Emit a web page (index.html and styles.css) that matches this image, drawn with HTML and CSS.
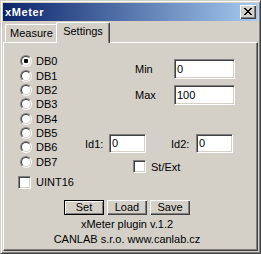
FILE: index.html
```
<!DOCTYPE html>
<html>
<head>
<meta charset="utf-8">
<link rel="stylesheet" href="styles.css">
</head>
<body>
<div class="window">
  <div class="titlebar">
    <span class="title">xMeter</span>
    <span class="close"><svg width="8" height="7" viewBox="0 0 8 7" shape-rendering="crispEdges"><path d="M0 0h2v1H0zM6 0h2v1H6zM1 1h2v1H1zM5 1h2v1H5zM2 2h4v1H2zM3 3h2v1H3zM2 4h4v1H2zM1 5h2v1H1zM5 5h2v1H5zM0 6h2v1H0zM6 6h2v1H6z"/></svg></span>
  </div>
  <div class="tabstrip">
    <div class="tab">Measure</div>
    <div class="tab active">Settings</div>
  </div>
  <div class="panel">
    <div class="main">
      <div class="left">
        <div class="opt"><span class="radio"><span class="radio-in"><span class="dot"></span></span></span>DB0</div>
        <div class="opt"><span class="radio"><span class="radio-in"></span></span>DB1</div>
        <div class="opt"><span class="radio"><span class="radio-in"></span></span>DB2</div>
        <div class="opt"><span class="radio"><span class="radio-in"></span></span>DB3</div>
        <div class="opt"><span class="radio"><span class="radio-in"></span></span>DB4</div>
        <div class="opt"><span class="radio"><span class="radio-in"></span></span>DB5</div>
        <div class="opt"><span class="radio"><span class="radio-in"></span></span>DB6</div>
        <div class="opt"><span class="radio"><span class="radio-in"></span></span>DB7</div>
        <div class="opt chk"><span class="check"></span>UINT16</div>
      </div>
      <div class="right">
        <div class="range">
          <div class="field"><span class="lbl">Min</span><span class="edit">0</span></div>
          <div class="field"><span class="lbl">Max</span><span class="edit">100</span></div>
        </div>
        <div class="ids">
          <span class="lbl id1">Id1:</span><span class="edit small">0</span>
          <span class="lbl id2">Id2:</span><span class="edit small">0</span>
        </div>
        <div class="opt stext"><span class="check"></span>St/Ext</div>
      </div>
    </div>
    <div class="buttons">
      <span class="btn default">Set</span><span class="btn">Load</span><span class="btn">Save</span>
    </div>
    <div class="info">xMeter plugin v.1.2<br>CANLAB s.r.o. www.canlab.cz</div>
  </div>
</div>
</body>
</html>
```
FILE: styles.css
```
* { box-sizing: border-box; }
body {
  margin: 0;
  background: #d4d0c8;
  font: 11px "Liberation Sans", Arial, sans-serif;
  color: #000;
}
.window {
  width: 261px;
  height: 254px;
  background: #d4d0c8;
  border: 1px solid;
  border-color: #d4d0c8 #404040 #404040 #d4d0c8;
  box-shadow: inset 1px 1px #fff, inset -1px -1px #808080;
  padding: 2px;
  display: flex;
  flex-direction: column;
}
.titlebar {
  height: 18px;
  flex: none;
  background: linear-gradient(to right, #0a246a, #a6caf0);
  display: flex;
  align-items: flex-start;
  justify-content: space-between;
  padding: 2px 2px 0 2px;
}
.title {
  color: #fff;
  font-weight: bold;
  letter-spacing: 0.6px;
  line-height: 14px;
}
.close {
  width: 16px;
  height: 14px;
  background: #d4d0c8;
  box-shadow: inset 1px 1px #fff, inset -1px -1px #404040, inset -2px -2px #808080;
  padding: 3px 0 0 4px;
  display: flex;
  align-items: flex-start;
}
.close svg { display: block; fill: #000; }
.tabstrip {
  flex: none;
  display: flex;
  align-items: flex-end;
  padding: 1px 0 0 2px;
  height: 21px;
}
.tab {
  width: 53px;
  height: 18px;
  line-height: 17px;
  text-align: center;
  white-space: nowrap;
  border-left: 1px solid #fff;
  border-top: 1px solid #fff;
  border-right: 1px solid #404040;
  box-shadow: inset -1px 0 #808080;
  border-radius: 2px 2px 0 0;
  background: #d4d0c8;
}
.tab.active {
  width: 54px;
  height: 21px;
  margin: 0 0 -1px -2px;
  padding-bottom: 3px;
  position: relative;
  z-index: 1;
}
.panel {
  flex: 1;
  border: 1px solid;
  border-color: #fff #404040 #404040 #fff;
  box-shadow: inset -1px -1px #808080;
  padding-right: 7px;
}
.main {
  display: grid;
  grid-template-columns: 81px 1fr;
  height: 157px;
}
.left {
  padding-top: 11.35px;
  padding-left: 16px;
}
.opt {
  display: flex;
  align-items: center;
  height: 14.3px;
  white-space: nowrap;
}
.radio {
  flex: none;
  width: 12px;
  height: 12px;
  margin-right: 4px;
  border-radius: 50%;
  border: 1px solid;
  border-color: #808080 #fff #fff #808080;
}
.radio-in {
  display: flex;
  align-items: center;
  justify-content: center;
  width: 10px;
  height: 10px;
  border-radius: 50%;
  border: 1px solid;
  border-color: #404040 #d4d0c8 #d4d0c8 #404040;
  background: #fff;
}
.dot {
  width: 4px;
  height: 4px;
  border-radius: 1px;
  background: #000;
}
.check {
  flex: none;
  width: 13px;
  height: 13px;
  margin-right: 5px;
  background: #fff;
  border: 1px solid;
  border-color: #808080 #fff #fff #808080;
  box-shadow: inset 1px 1px #404040, inset -1px -1px #d4d0c8;
}
.opt.chk {
  margin-top: 6.75px;
  margin-left: -2px;
  height: 14px;
}
.range {
  margin: 16px 0 0 50px;
  display: flex;
  flex-direction: column;
  gap: 6px;
}
.field {
  display: flex;
  align-items: center;
}
.field .lbl { width: 39px; }
.edit {
  display: block;
  width: 61px;
  height: 20px;
  line-height: 18px;
  padding-left: 2px;
  background: #fff;
  border: 1px solid;
  border-color: #808080 #fff #fff #808080;
  box-shadow: inset 1px 1px #404040, inset -1px -1px #d4d0c8;
}
.edit.small {
  width: 37px;
  height: 19px;
  line-height: 17px;
}
.ids {
  display: flex;
  align-items: center;
  margin-top: 29px;
}
.ids .id1 { width: 24px; }
.ids .id2 { width: 25px; margin-left: 25px; }
.opt.stext {
  height: 13px;
  margin: 7px 0 0 48px;
}
.buttons {
  display: flex;
  justify-content: center;
  gap: 3px;
}
.btn {
  width: 40px;
  height: 15px;
  line-height: 15px;
  text-align: center;
  box-shadow: inset 1px 1px #fff, inset -1px -1px #404040, inset -2px -2px #808080;
}
.btn.default {
  border: 1px solid #000;
  line-height: 13px;
  box-shadow: inset 1px 1px #fff, inset -1px -1px #808080;
}
.info {
  margin-top: 2px;
  text-align: center;
  line-height: 15px;
}
```
